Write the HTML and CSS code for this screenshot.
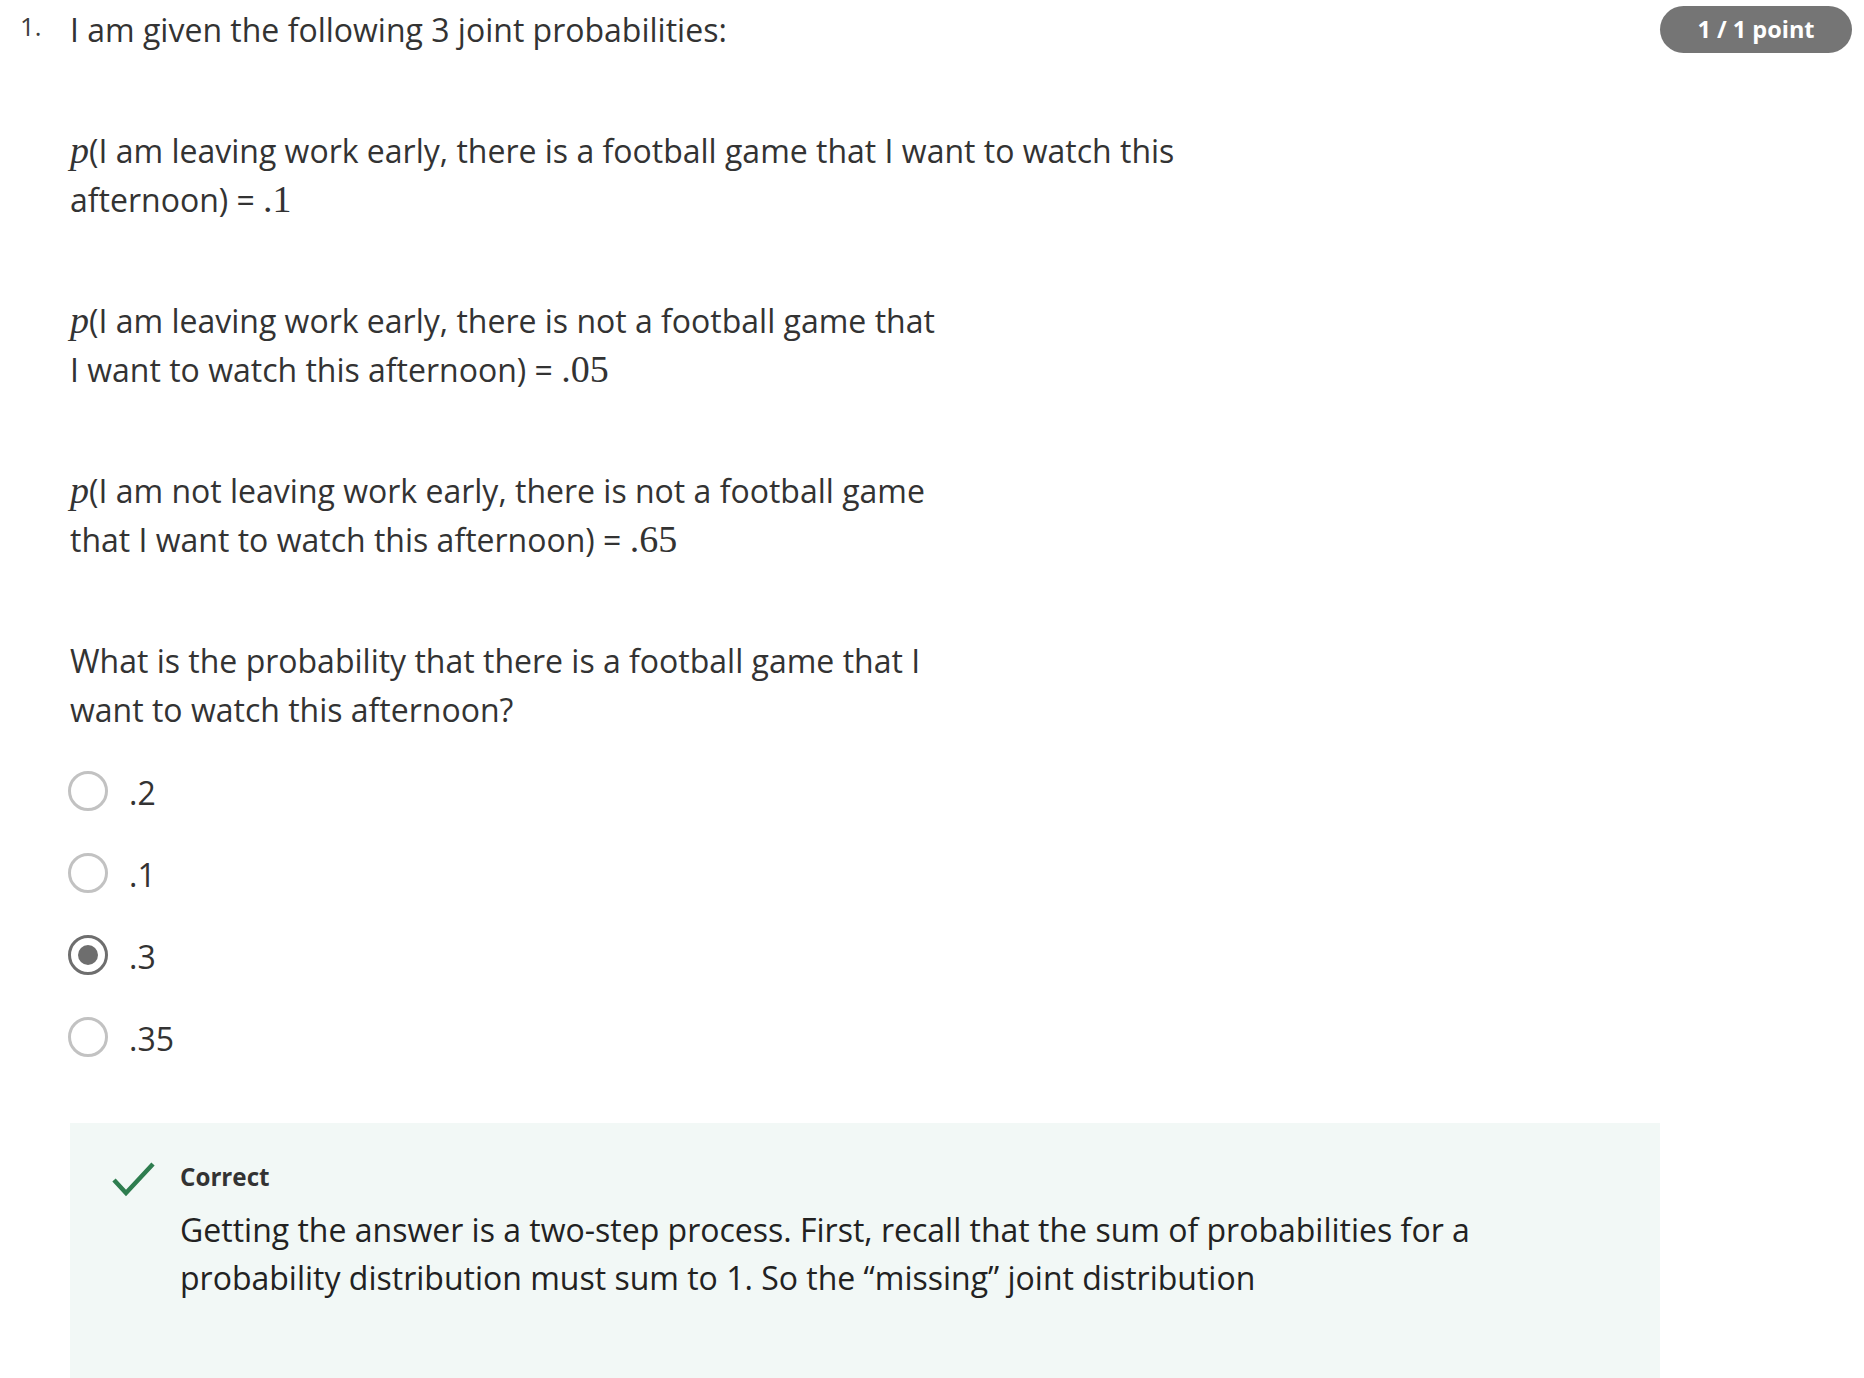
FILE: index.html
```html
<!DOCTYPE html>
<html lang="en">
<head>
<meta charset="utf-8">
<title>Quiz question</title>
<link rel="stylesheet" href="styles.css">
</head>
<body>
<div class="question">
  <div class="qnum">1.</div>
  <div class="qbody">
    <p class="line first">I am given the following 3 joint probabilities:</p>
    <p class="para"><span class="mi">p</span>(I am leaving work early, there is a football game that I want to watch this<br>afternoon) = <span class="mn">.1</span></p>
    <p class="para"><span class="mi">p</span>(I am leaving work early, there is not a football game that<br>I want to watch this afternoon) = <span class="mn">.05</span></p>
    <p class="para"><span class="mi">p</span>(I am not leaving work early, there is not a football game<br>that I want to watch this afternoon) = <span class="mn">.65</span></p>
    <p class="para">What is the probability that there is a football game that I<br>want to watch this afternoon?</p>
    <div class="options">
      <label class="option"><span class="radio"></span><span class="opt-text">.2</span></label>
      <label class="option"><span class="radio"></span><span class="opt-text">.1</span></label>
      <label class="option"><span class="radio checked"></span><span class="opt-text">.3</span></label>
      <label class="option"><span class="radio"></span><span class="opt-text">.35</span></label>
    </div>
    <div class="feedback">
      <svg class="check" width="48" height="48" viewBox="0 0 48 48" aria-hidden="true">
        <path d="M6 25 L18 38 L45 9" fill="none" stroke="#2e7d4f" stroke-width="4.5" stroke-linecap="butt" stroke-linejoin="miter"/>
      </svg>
      <div class="fb-text">
        <div class="fb-title">Correct</div>
        <p class="fb-body">Getting the answer is a two-step process. First, recall that the sum of probabilities for a<br>probability distribution must sum to 1. So the “missing” joint distribution</p>
      </div>
    </div>
  </div>
  <div class="badge">1 / 1 point</div>
</div>
</body>
</html>
```

FILE: styles.css
```css
html, body {
  margin: 0;
  padding: 0;
  background: #ffffff;
}

body {
  font-family: "Open Sans", "Noto Sans", sans-serif;
  color: #333333;
  overflow: hidden;
}

.question {
  display: grid;
  grid-template-columns: 50px 1fr 192px;
  padding: 0 12px 0 20px;
}

.qnum {
  font-size: 25.6px;
  line-height: 36px;
  margin-top: 9px;
  color: #3d3d3d;
}

.qbody {
  min-width: 0;
}

.line,
.para {
  margin: 0;
  font-size: 32px;
  line-height: 49px;
}

.line.first {
  margin-top: 4.5px;
}

.para {
  margin-top: 72px;
}

.mi {
  font-family: "Liberation Serif", "DejaVu Serif", serif;
  font-style: italic;
  font-size: 38px;
}

.mn {
  font-family: "Liberation Serif", "DejaVu Serif", serif;
  font-size: 38px;
}

.options {
  margin-top: 37px;
  display: flex;
  flex-direction: column;
  gap: 42.3px;
}

.option {
  display: flex;
  align-items: center;
  height: 40px;
  margin-left: -2px;
}

.radio {
  box-sizing: border-box;
  width: 40px;
  height: 40px;
  border-radius: 50%;
  border: 3.5px solid #c2c2c2;
  display: flex;
  align-items: center;
  justify-content: center;
  flex: none;
}

.radio.checked {
  border-color: #6e6e6e;
}

.radio.checked::after {
  content: "";
  width: 20px;
  height: 20px;
  border-radius: 50%;
  background: #6e6e6e;
}

.opt-text {
  font-size: 32px;
  line-height: 40px;
  padding-top: 4px;
  margin-left: 21px;
  color: #333333;
}

.feedback {
  margin-top: 66px;
  background: #f2f8f6;
  height: 280px;
  box-sizing: border-box;
  padding: 32px 0 0 38px;
  display: flex;
  align-items: flex-start;
}

.check {
  flex: none;
  display: block;
}

.fb-text {
  margin-left: 24px;
  margin-top: 4px;
}

.fb-title {
  font-weight: 700;
  font-size: 24.2px;
  line-height: 36px;
  color: #333333;
}

.fb-body {
  margin: 11px 0 0;
  font-size: 32px;
  line-height: 48px;
  color: #222222;
}

.badge {
  align-self: start;
  margin-top: 6px;
  height: 47px;
  line-height: 47px;
  border-radius: 24px;
  background: #757575;
  color: #ffffff;
  font-weight: 700;
  font-size: 23.5px;
  text-align: center;
  white-space: nowrap;
}
```
